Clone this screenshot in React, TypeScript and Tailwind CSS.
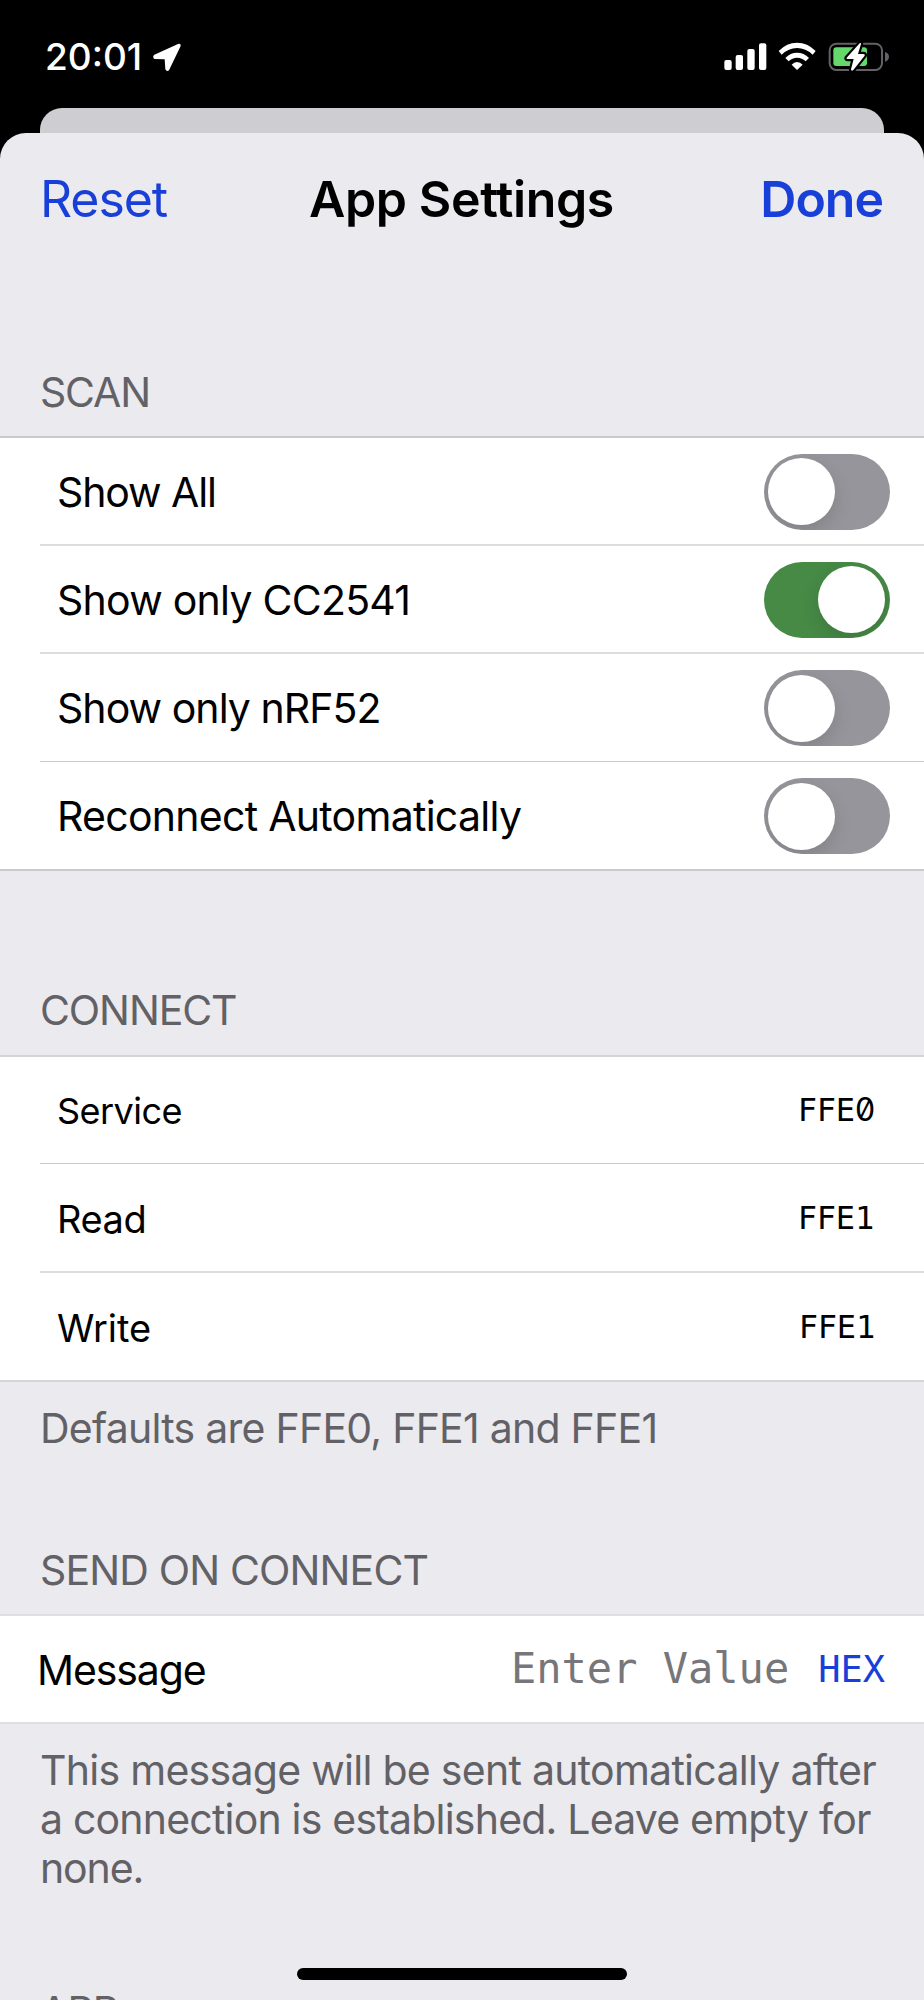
import { useState } from 'react';
import clsx from 'clsx';

const SCAN_OPTIONS = [
  { label: 'Show All', on: false, row: 'h-[108px] border-b-2 border-[#dcdcde]', track: 'tracking-[-1.1px]' },
  { label: 'Show only CC2541', on: true, row: 'h-[108px] border-b-2 border-[#dcdcde]', track: 'tracking-[-0.75px]' },
  { label: 'Show only nRF52', on: false, row: 'h-[108px] border-b border-[#cacacd]', track: 'tracking-[-0.95px]' },
  { label: 'Reconnect Automatically', on: false, row: 'h-[107px]', track: 'tracking-[-0.72px]' },
];

const CONNECT_FIELDS = [
  { label: 'Service', value: 'FFE0', row: 'h-[107px] border-b border-[#cacacd]', pad: 'pr-[50px]', text: 'text-[36px] tracking-[-0.55px]' },
  { label: 'Read', value: 'FFE1', row: 'h-[109px] border-b-2 border-[#dcdcde]', pad: 'pr-[50px]', text: 'text-[38px] tracking-[-0.4px]' },
  { label: 'Write', value: 'FFE1', row: 'h-[107px]', pad: 'pr-[49px]', text: 'text-[38px] tracking-[-0.1px]' },
];

function StatusBar() {
  return (
    <div className="flex h-[108px] items-start pt-[42px] pl-[45px] pr-[34px] text-white">
      <span className="text-[37px] leading-[30px] font-[550] tracking-[0px]">20:01</span>
      <svg width="30" height="30" viewBox="459 126 90 90" className="ml-[10px]">
        <path
          d="M537 132 L466 164 Q459 170 466 177 L497 178 L499 208 Q503 216 510 211 L545 138 Q546 129 537 132 Z"
          fill="currentColor"
        />
      </svg>
      <div className="ml-auto flex items-start">
        <svg width="43" height="30" viewBox="300 126 129 90" fill="currentColor">
          <rect x="301" y="180" width="22" height="30" rx="6" />
          <rect x="335" y="165" width="22" height="45" rx="6" />
          <rect x="370" y="147" width="22" height="63" rx="6" />
          <rect x="405" y="130" width="22" height="80" rx="6" />
        </svg>
        <svg width="38" height="30" viewBox="463 126 114 90" className="ml-[11px]" fill="currentColor">
          <path d="M465 153 Q489 128 520 128 Q552 128 576 153 L567 164 Q546 144 520 144 Q495 144 474 164 Z" />
          <path d="M485 174 Q500 158 520 158 Q541 158 556 174 L546 184 Q535 173 520 173 Q506 173 495 184 Z" />
          <path d="M504 194 Q511 186 520 186 Q530 186 537 194 L520 210 Z" />
        </svg>
        <svg width="62" height="30" viewBox="612 126 186 90" className="ml-[12px]">
          <rect x="617" y="131" width="157" height="79" rx="20" fill="none" stroke="#636166" strokeWidth="6" />
          <path d="M783 156 Q795 160 795 170 Q795 181 783 185 Z" fill="#636166" />
          <rect x="628" y="142" width="101" height="56" rx="9" fill="#65d86c" />
          <path
            d="M707 130 L668 173 Q666 177 671 177 L689 177 L681 208 Q682 215 688 210 L722 167 Q724 162 718 162 L702 162 L711 132 Q711 127 707 130 Z"
            fill="#fff"
            stroke="#000"
            strokeWidth="13"
            paintOrder="stroke"
          />
        </svg>
      </div>
    </div>
  );
}

function Toggle({ initial, label }: { initial: boolean; label: string }) {
  const [on, setOn] = useState(initial);

  return (
    <button
      type="button"
      role="switch"
      aria-checked={on}
      aria-label={label}
      onClick={() => setOn(!on)}
      className={clsx(
        'flex h-[76px] w-[126px] items-center overflow-hidden rounded-full px-[4.5px]',
        on ? 'justify-end bg-[#468a46]' : 'justify-start bg-[#96959b]',
      )}
    >
      <span className="size-[67px] rounded-full bg-white shadow-[0_7px_18px_rgba(0,0,0,0.13)]" />
    </button>
  );
}

function HexValue({ value }: { value: string }) {
  return (
    <span className="flex font-['DejaVu_Sans_Mono',monospace] text-[32px] leading-none">
      {value.split('').map((c, i) => (
        <span
          key={i}
          className={clsx(
            'w-[19.1px] text-center',
            c === '0' && "font-['Inter',sans-serif] [font-feature-settings:'zero']",
          )}
        >
          {c}
        </span>
      ))}
    </span>
  );
}

export default function App() {
  return (
    <div className="flex h-[2000px] w-[924px] flex-col overflow-hidden bg-black font-['Inter',sans-serif] text-black">
      <StatusBar />

      {/* Sheet underneath */}
      <div className="mx-10 h-[25px] shrink-0 rounded-t-[22px] bg-[#cecdd2]" />

      <div className="relative flex-1 overflow-hidden rounded-t-[26px] bg-[#ebeaef]">
        <header className="mr-[41px] ml-[40px] flex h-[131px] items-center text-[50px] leading-none text-[#183fd8]">
          <button type="button" className="flex-1 text-left tracking-[-1.1px]">Reset</button>
          <h1 className="font-semibold text-black tracking-[-0.4px]">App Settings</h1>
          <button type="button" className="flex-1 text-right font-semibold tracking-[-1px]">Done</button>
        </header>

        {/* Scan */}
        <h2 className="mt-[104px] h-[68px] pl-[40px] text-[41px] leading-[48px] tracking-[-1.2px] text-[#626166]">SCAN</h2>
        <div className="border-y-2 border-[#cacace] bg-white">
          {SCAN_OPTIONS.map(({ label, on, row, track }) => (
            <div key={label} className={clsx('ml-[40px] flex items-center pt-[1px] pr-[34.5px] pl-[17px]', row)}>
              <span className={clsx('pt-[1px] text-[41px] leading-none', track)}>{label}</span>
              <div className="ml-auto">
                <Toggle initial={on} label={label} />
              </div>
            </div>
          ))}
        </div>

        {/* Connect */}
        <h2 className="mt-[115px] h-[69px] pl-[40px] text-[41px] leading-[48px] tracking-[-1.1px] text-[#626166]">CONNECT</h2>
        <div className="border-y-2 border-[#d5d4d9] bg-white">
          {CONNECT_FIELDS.map(({ label, value, row, pad, text }) => (
            <div key={label} className={clsx('ml-[40px] flex items-center pt-[2px] pl-[17px]', row, pad)}>
              <span className={clsx('leading-none', text)}>{label}</span>
              <div className="ml-auto pb-[2px]">
                <HexValue value={value} />
              </div>
            </div>
          ))}
        </div>
        <p className="mt-[22px] pl-[40px] text-[41px] leading-[48px] tracking-[-0.75px] text-[#626166]">
          Defaults are FFE0, FFE1 and FFE1
        </p>

        {/* Send on connect */}
        <h2 className="mt-[94px] h-[68px] pl-[40px] text-[41px] leading-[48px] tracking-[-0.85px] text-[#626166]">SEND ON CONNECT</h2>
        <div className="flex h-[110px] items-center border-y-2 border-[#dfdfe2] bg-white pr-[39px] pl-[37px]">
          <span className="pt-[2px] text-[41px] leading-none tracking-[-1.1px]">Message</span>
          <span className="ml-auto font-['DejaVu_Sans_Mono',monospace] text-[42px] leading-none text-[#77767b]">
            Enter Value
          </span>
          <button type="button" className="ml-[29px] font-['DejaVu_Sans_Mono',monospace] text-[37px] leading-none text-[#183fd8]">
            HEX
          </button>
        </div>
        <p className="mt-[22px] pl-[40px] text-[41px] leading-[49.2px] text-[#626166]">
          <span className="block tracking-[-0.72px] whitespace-nowrap">This message will be sent automatically after</span>
          <span className="block tracking-[-0.8px] whitespace-nowrap">a connection is established. Leave empty for</span>
          <span className="block tracking-[-1.1px] whitespace-nowrap">none.</span>
        </p>

        {/* App */}
        <h2 className="mt-[93px] pl-[40px] text-[41px] leading-[48px] tracking-[-0.8px] text-[#626166]">APP</h2>

        {/* Home indicator */}
        <div className="absolute bottom-[20px] left-[297px] h-[12px] w-[330px] rounded-full bg-black" />
      </div>
    </div>
  );
}
